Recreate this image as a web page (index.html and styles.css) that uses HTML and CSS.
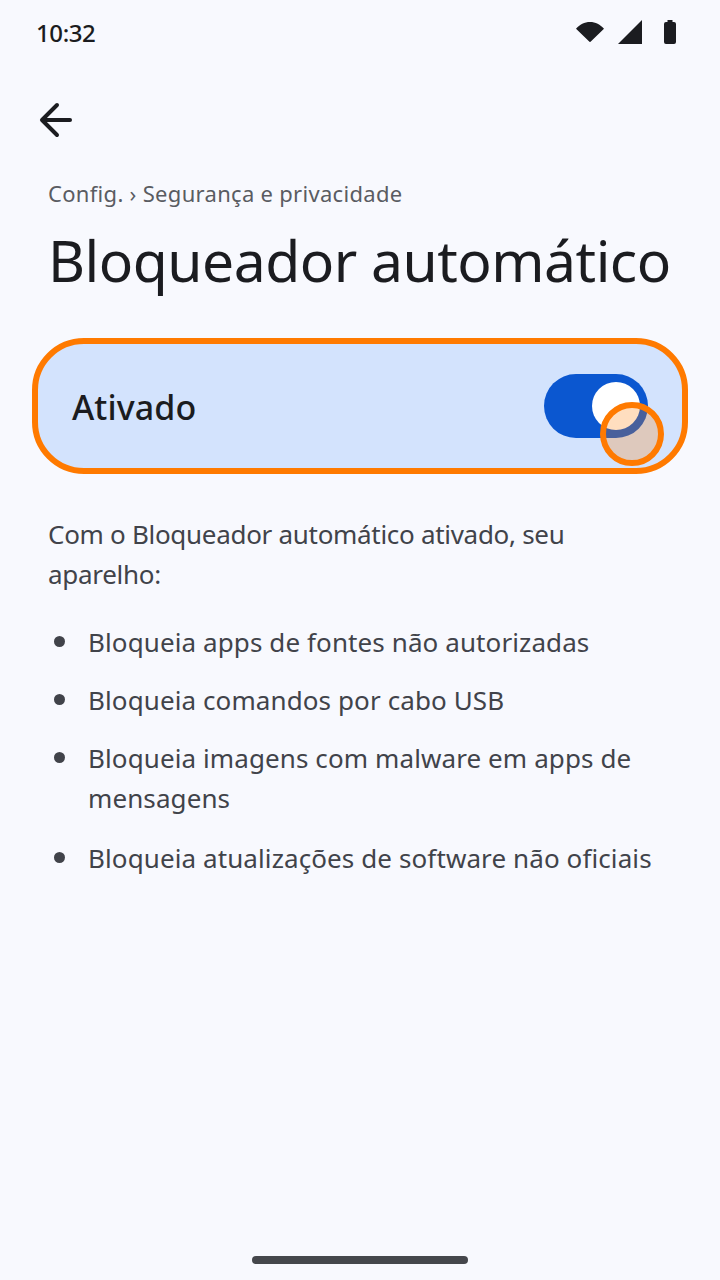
FILE: index.html
```html
<!DOCTYPE html>
<html lang="pt-BR">
<head>
    <meta charset="UTF-8">
    <meta name="viewport" content="width=device-width, initial-scale=1.0">
    <title>Bloqueador automático</title>
    <link rel="stylesheet" href="styles.css">
</head>
<body>
    <div class="screen">
        <div class="status-bar">
            <span class="clock">10:32</span>
            <div class="status-icons">
                <svg width="28" height="20" viewBox="0 0 28 20"><path d="M0 6.800C3.700 2.600 8.500 0 14 0s10.300 2.600 14 6.800L14.800 19.500a1 1 0 0 1-1.600 0z" fill="#1b1c20"/></svg>
                <svg width="24" height="24" viewBox="0 0 24 24"><path d="M24 0v24H0z" fill="#1b1c20"/></svg>
                <svg class="icon-battery" width="12" height="24" viewBox="0 0 12 24"><path d="M3.500 0h5v2H10a2 2 0 0 1 2 2v18a2 2 0 0 1-2 2H2a2 2 0 0 1-2-2V4a2 2 0 0 1 2-2h1.500z" fill="#1b1c20"/></svg>
            </div>
        </div>

        <div class="top-bar">
            <svg width="36" height="36" viewBox="0 0 36 36" fill="none" stroke="#1b1c20" stroke-width="4" stroke-linecap="round" stroke-linejoin="round"><path d="M32 18H5"/><path d="M19 3 4 18l15 15"/></svg>
        </div>

        <div class="breadcrumb">Config. › Segurança e privacidade</div>
        <h1>Bloqueador automático</h1>

        <div class="main-switch">
            <span class="switch-label">Ativado</span>
            <div class="toggle"><div class="thumb"></div></div>
            <div class="touch-mark"></div>
        </div>

        <p class="intro">Com o Bloqueador automático ativado, seu aparelho:</p>
        <ul class="features">
            <li>Bloqueia apps de fontes não autorizadas</li>
            <li>Bloqueia comandos por cabo USB</li>
            <li class="wrapped">Bloqueia imagens com malware em apps de mensagens</li>
            <li>Bloqueia atualizações de software não oficiais</li>
        </ul>

        <div class="nav-handle"></div>
    </div>
</body>
</html>
```

FILE: styles.css
```css
* {
    box-sizing: border-box;
}
body {
    margin: 0;
    background-color: #f8f9fe;
    font-family: "Noto Sans", Inter, sans-serif;
    color: #1b1c20;
}
.screen {
    position: relative;
    height: 1280px;
    overflow: hidden;
}
.status-bar {
    display: flex;
    justify-content: space-between;
    align-items: center;
    height: 64px;
    padding: 0 44px 0 36px;
}
.clock {
    font-size: 24px;
    font-weight: 500;
    letter-spacing: -0.4px;
}
.status-icons {
    display: flex;
    align-items: center;
    gap: 14px;
}
.status-icons svg {
    display: block;
}
.icon-battery {
    margin-left: 8px;
}
.top-bar {
    display: flex;
    align-items: center;
    height: 36px;
    margin: 38px 0 0 38px;
}
.breadcrumb {
    margin: 40px 0 0 48px;
    font-size: 22px;
    line-height: 30px;
    letter-spacing: 0.3px;
    color: #5a5c62;
}
h1 {
    margin: 14px 0 0 48px;
    font-size: 57px;
    font-weight: 400;
    line-height: 76px;
    letter-spacing: -0.5px;
    white-space: nowrap;
}
.main-switch {
    position: relative;
    display: flex;
    justify-content: space-between;
    align-items: center;
    width: 656px;
    height: 136px;
    margin: 40px 0 0 32px;
    padding: 0 34px;
    border: 6px solid #ff7a00;
    border-radius: 52px;
    background-color: #d3e3fd;
}
.switch-label {
    padding-top: 2px;
    font-size: 34px;
    font-weight: 550;
    letter-spacing: 0.1px;
}
.toggle {
    display: flex;
    justify-content: flex-end;
    align-items: center;
    width: 104px;
    height: 64px;
    padding-right: 8px;
    border-radius: 32px;
    background-color: #0b57d0;
}
.thumb {
    width: 48px;
    height: 48px;
    border-radius: 50%;
    background-color: #fff;
}
.touch-mark {
    position: absolute;
    left: 562px;
    top: 58px;
    width: 64px;
    height: 64px;
    border: 6px solid #ff7a00;
    border-radius: 50%;
    background-color: rgba(255, 122, 0, 0.25);
}
.intro {
    margin: 40px 48px 0;
    font-size: 26px;
    line-height: 40px;
    letter-spacing: -0.3px;
    color: #41434a;
}
.features {
    margin: 28px 48px 0;
    padding: 0 0 0 40px;
    list-style: none;
    font-size: 26px;
    line-height: 40px;
    letter-spacing: 0.1px;
    color: #41434a;
}
.features li {
    position: relative;
    margin-bottom: 18px;
}
.features li.wrapped {
    margin-bottom: 20px;
}
.features li::before {
    content: "";
    position: absolute;
    left: -34px;
    top: 14px;
    width: 11px;
    height: 11px;
    border-radius: 50%;
    background-color: #41434a;
}
.nav-handle {
    position: absolute;
    left: 252px;
    bottom: 16px;
    width: 216px;
    height: 8px;
    border-radius: 4px;
    background-color: #45474c;
}
```
